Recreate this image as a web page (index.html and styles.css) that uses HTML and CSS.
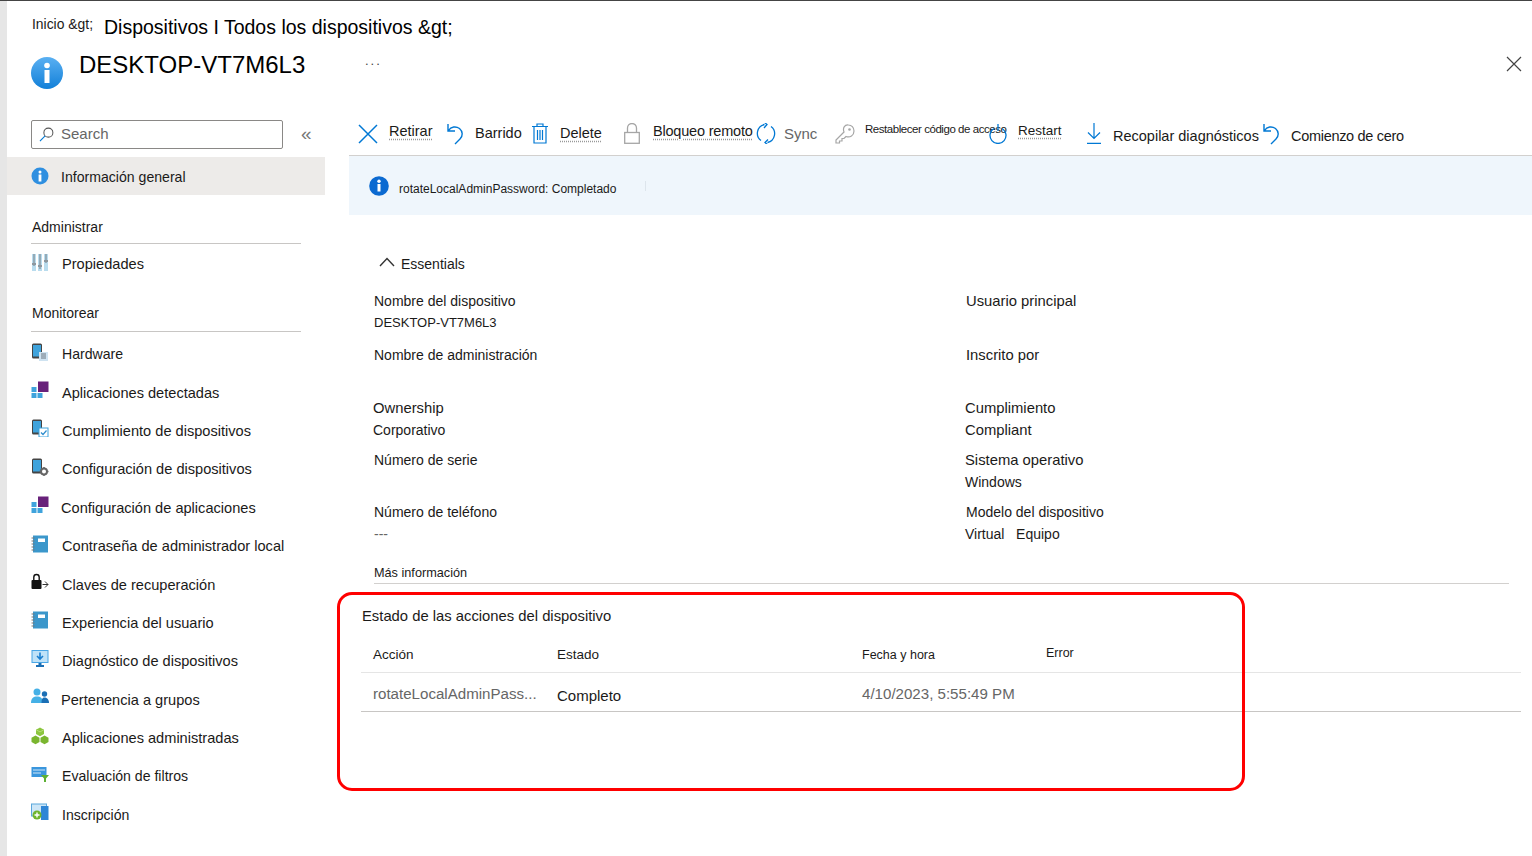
FILE: index.html
```html
<!DOCTYPE html>
<html lang="es">
<head>
<meta charset="UTF-8">
<title>DESKTOP-VT7M6L3</title>
<link rel="stylesheet" href="styles.css">
</head>
<body>
<div class="page">
  <div class="strip"></div>
  <div class="blade">
    <div class="blade-head">
      <div class="crumbs">
        <span class="crumb-home">Inicio &amp;gt;</span>
        <span class="crumb-path">Dispositivos I Todos los dispositivos &amp;gt;</span>
      </div>
      <div class="title-row">
        <svg class="title-icon" viewBox="0 0 32 32">
          <defs><linearGradient id="infoGrad" x1="0" y1="0" x2="0" y2="1"><stop offset="0" stop-color="#5ab0f2"/><stop offset="1" stop-color="#1280d8"/></linearGradient></defs>
          <circle cx="16" cy="16" r="16" fill="url(#infoGrad)"/>
          <rect x="13.5" y="13" width="5" height="13" fill="#fff"/>
          <circle cx="16" cy="8.5" r="2.8" fill="#fff"/>
        </svg>
        <h1 class="title">DESKTOP-VT7M6L3</h1>
        <span class="more">...</span>
        <svg class="close" viewBox="0 0 16 16"><path d="M1 1l14 14M15 1L1 15" stroke="#444" stroke-width="1.2" fill="none"/></svg>
      </div>
    </div>
    <div class="blade-body">
      <nav class="sidebar">
        <div class="search-row">
          <div class="search">
            <svg class="search-icon" viewBox="0 0 16 16"><circle cx="10" cy="6" r="4.8" fill="none" stroke="#555" stroke-width="1.1"/><path d="M6.5 9.5L1 15" stroke="#0078d4" stroke-width="1.2"/></svg>
            <span class="search-text">Search</span>
          </div>
          <span class="collapse">«</span>
        </div>
        <a class="nav-item active">
          <svg class="nav-icon" viewBox="0 0 18 18"><circle cx="9" cy="9" r="8.5" fill="#2f8fe0"/><rect x="7.6" y="7.5" width="2.8" height="7" fill="#fff"/><circle cx="9" cy="4.9" r="1.5" fill="#fff"/></svg>
          <span class="nav-text shift sm">Información general</span>
        </a>
        <div class="nav-group first">Administrar</div>
        <a class="nav-item">
          <svg class="nav-icon" viewBox="0 0 18 18"><path d="M1 1h4v17H1zM7 1h4v17H7zM13 1h4v17h-4z" fill="#b9dcee"/><path d="M3 1v12M9 1v15M15 1v9" stroke="#7f8a93" stroke-width="1.2"/><path d="M1 11h4M7 13h4M13 8h4" stroke="#8d979f" stroke-width="2"/></svg>
          <span class="nav-text">Propiedades</span>
        </a>
        <div class="nav-group second">Monitorear</div>
        <a class="nav-item tight">
          <svg class="nav-icon" viewBox="0 0 18 18"><rect x="1" y="0.5" width="10" height="15" rx="1.5" fill="#444"/><rect x="2" y="2" width="8" height="11.5" fill="#3fa3dc"/><rect x="8" y="9" width="9" height="9" fill="#cfe3f1"/><path d="M10 11h5M10 13h5M10 15h5" stroke="#6d7780"/></svg>
          <span class="nav-text sm">Hardware</span>
        </a>
        <a class="nav-item tight">
          <svg class="nav-icon" viewBox="0 0 18 18"><rect x="7" y="0.5" width="10.5" height="10.5" fill="#68217a"/><rect x="0.5" y="6" width="5" height="5" fill="#3fa3dc"/><rect x="0.5" y="12" width="5" height="5" fill="#3fa3dc"/><rect x="6.5" y="12" width="5" height="5" fill="#3fa3dc"/></svg>
          <span class="nav-text">Aplicaciones detectadas</span>
        </a>
        <a class="nav-item tight">
          <svg class="nav-icon" viewBox="0 0 18 18"><rect x="1" y="0.5" width="10" height="15" rx="1.5" fill="#444"/><rect x="2" y="2" width="8" height="11.5" fill="#3fa3dc"/><rect x="8" y="9" width="9" height="9" fill="#fff" stroke="#3fa3dc"/><path d="M10 13.5l2 2 3.5-4" stroke="#2d8ccc" fill="none" stroke-width="1.2"/></svg>
          <span class="nav-text">Cumplimiento de dispositivos</span>
        </a>
        <a class="nav-item tight">
          <svg class="nav-icon" viewBox="0 0 18 18"><rect x="1" y="0.5" width="10" height="15" rx="1.5" fill="#444"/><rect x="2" y="2" width="8" height="11.5" fill="#3fa3dc"/><circle cx="13" cy="13.5" r="3" fill="#fff" stroke="#666" stroke-width="2"/><path d="M13 9v1.5M13 16.5V18M8.5 13.5H10M16 13.5h1.5" stroke="#666" stroke-width="1.5"/></svg>
          <span class="nav-text">Configuración de dispositivos</span>
        </a>
        <a class="nav-item tight">
          <svg class="nav-icon" viewBox="0 0 18 18"><rect x="7" y="0.5" width="10.5" height="10.5" fill="#68217a"/><rect x="0.5" y="6" width="5" height="5" fill="#3fa3dc"/><rect x="0.5" y="12" width="5" height="5" fill="#3fa3dc"/><rect x="6.5" y="12" width="5" height="5" fill="#3fa3dc"/></svg>
          <span class="nav-text shift">Configuración de aplicaciones</span>
        </a>
        <a class="nav-item tight">
          <svg class="nav-icon" viewBox="0 0 18 18"><rect x="2" y="0.5" width="15" height="17" fill="#3b97cb"/><rect x="7" y="3.5" width="7" height="3.5" fill="#fff"/><path d="M0.5 3h3M0.5 6h3M0.5 9h3M0.5 12h3M0.5 15h3" stroke="#777"/></svg>
          <span class="nav-text">Contraseña de administrador local</span>
        </a>
        <a class="nav-item tight">
          <svg class="nav-icon" viewBox="0 0 18 18"><rect x="0.5" y="7" width="10" height="9" rx="1" fill="#111"/><path d="M2.8 7V4.2a2.7 2.7 0 0 1 5.4 0V7" fill="none" stroke="#111" stroke-width="1.4"/><path d="M11.5 11.5h5.5M14 8.500l3 3-3 3" fill="none" stroke="#333"/></svg>
          <span class="nav-text">Claves de recuperación</span>
        </a>
        <a class="nav-item tight">
          <svg class="nav-icon" viewBox="0 0 18 18"><rect x="2" y="0.5" width="15" height="17" fill="#3b97cb"/><rect x="7" y="3.5" width="7" height="3.5" fill="#fff"/><path d="M0.5 3h3M0.5 6h3M0.5 9h3M0.5 12h3M0.5 15h3" stroke="#777"/></svg>
          <span class="nav-text">Experiencia del usuario</span>
        </a>
        <a class="nav-item tight">
          <svg class="nav-icon" viewBox="0 0 18 18"><rect x="1" y="0.5" width="16" height="12" fill="#bfe2f8" stroke="#49a6e6"/><path d="M9 2.5v6M6 6l3 3 3-3" fill="none" stroke="#1b7fd0" stroke-width="1.6"/><path d="M7.5 13h3v2h2.5v2H5v-2h2.5z" fill="#1b6fb5"/></svg>
          <span class="nav-text">Diagnóstico de dispositivos</span>
        </a>
        <a class="nav-item tight">
          <svg class="nav-icon" viewBox="0 0 18 18"><circle cx="6" cy="4" r="3.5" fill="#45b0e6"/><path d="M0 15c0-5 2.500-6.500 6-6.500s6 1.500 6 6.500z" fill="#45b0e6"/><circle cx="13.5" cy="6" r="2.700" fill="#1b6fb5"/><path d="M10.500 15c0-4 1-5.500 3-5.500s4.500 1.500 4.500 5.500z" fill="#1b6fb5"/></svg>
          <span class="nav-text shift">Pertenencia a grupos</span>
        </a>
        <a class="nav-item tight">
          <svg class="nav-icon" viewBox="0 0 18 18"><path d="M9 0.500l4 2.200v4.300l-4 2.200-4-2.200V2.700z" fill="#8cc63f"/><path d="M5 2.700l4 2.200 4-2.200" fill="none" stroke="#b5dc77"/><path d="M4.500 8.500l4 2.200v4.300l-4 2.200-4-2.200v-4.300z" fill="#7ab52f"/><path d="M13.500 8.500l4 2.200v4.300l-4 2.200-4-2.200v-4.300z" fill="#7ab52f"/></svg>
          <span class="nav-text">Aplicaciones administradas</span>
        </a>
        <a class="nav-item tight">
          <svg class="nav-icon" viewBox="0 0 18 18"><rect x="0.500" y="2" width="15" height="10" fill="#3a96dd"/><path d="M2 5h12M2 8h8" stroke="#cfe6f7"/><path d="M10 10h8l-3 3.500V17h-2v-3.500z" fill="#5db034"/></svg>
          <span class="nav-text sm">Evaluación de filtros</span>
        </a>
        <a class="nav-item tight">
          <svg class="nav-icon" viewBox="0 0 18 18"><rect x="0.500" y="1" width="15" height="12" fill="#cde6f7" stroke="#5aa7dc"/><rect x="10" y="3" width="7.500" height="14" fill="#2f86d6"/><circle cx="6" cy="12" r="4.500" fill="#6fb52c"/><path d="M6 9.500v5M3.500 12h5" stroke="#fff" stroke-width="1.400"/></svg>
          <span class="nav-text sm">Inscripción</span>
        </a>
      </nav>
      <main class="main">
        <div class="toolbar">
          <div class="tool">
            <span class="tool-icon gap-31"><svg width="20" height="20" viewBox="0 0 20 20"><path d="M1 1l18 18M19 1L1 19" stroke="#0078d4" stroke-width="1.500" fill="none"/></svg></span>
            <span class="tool-text ghost lift-6">Retirar</span>
          </div>
          <div class="tool">
            <span class="tool-icon gap-28"><svg width="17" height="22" viewBox="0 0 17 22"><path d="M1 1v7h7M1.500 7.500C4 3.500 9 3 12.500 5.500c3.500 3 3.500 7.500.5 10.500l-5 5" stroke="#0078d4" stroke-width="1.400" fill="none"/></svg></span>
            <span class="tool-text lift-2">Barrido</span>
          </div>
          <div class="tool">
            <span class="tool-icon gap-28"><svg width="16" height="21" viewBox="0 0 16 21"><path d="M0 3.500h16M5 3.500V1h6v2.500M2 3.500v16.500h12V3.500M5.500 7v10M8 7v10M10.500 7v10" stroke="#0078d4" stroke-width="1.200" fill="none"/></svg></span>
            <span class="tool-text ghost lift-2">Delete</span>
          </div>
          <div class="tool">
            <span class="tool-icon gap-29"><svg width="16" height="21" viewBox="0 0 16 21"><path d="M3.500 9.500V5a4.500 4.500 0 0 1 9 0v4.500" stroke="#a6a6a6" stroke-width="1.300" fill="none"/><rect x="0.700" y="9.500" width="14.600" height="10.800" fill="none" stroke="#a6a6a6" stroke-width="1.300"/></svg></span>
            <span class="tool-text ghost narrow lift-6">Bloqueo remoto</span>
          </div>
          <div class="tool">
            <span class="tool-icon gap-28"><svg width="20" height="21" viewBox="0 0 20 21"><path d="M8.500 1.500A9 9 0 0 0 5 17.500M11.500 19.500A9 9 0 0 0 15 3.500" stroke="#0078d4" stroke-width="1.300" fill="none"/><path d="M8 -1l3 2.500L8 5M12 22l-3-2.500 3-3" stroke="#0078d4" stroke-width="1.300" fill="none"/></svg></span>
            <span class="tool-text muted">Sync</span>
          </div>
          <div class="tool">
            <span class="tool-icon gap-30"><svg width="20" height="20" viewBox="0 0 20 20"><path d="M9 8L1 16v3h3.500v-2H7v-2.500h2l2-2c4 1.500 8-1 8-5.500 0-3.500-2.500-6-5.500-6C9.500.500 7.500 4 9 8z" stroke="#a6a6a6" stroke-width="1.200" fill="none"/><circle cx="14.500" cy="5.500" r="1.300" fill="#a6a6a6"/></svg></span>
            <span class="tool-text small lift-10">Restablecer código de acceso</span>
          </div>
          <div class="tool">
            <span class="tool-icon gap-29"><svg width="18" height="20" viewBox="0 0 18 20"><path d="M5 4.500a8 8 0 1 0 8 0" stroke="#0078d4" stroke-width="1.300" fill="none"/><path d="M9 0v7" stroke="#0078d4" stroke-width="1.300"/></svg></span>
            <span class="tool-text ghost restart lift-6">Restart</span>
          </div>
          <div class="tool">
            <span class="tool-icon gap-26"><svg width="14" height="21" viewBox="0 0 14 21"><path d="M7 0v15M1 9.500L7 15.500l6-6M0 20.300h14" stroke="#0078d4" stroke-width="1.200" fill="none"/></svg></span>
            <span class="tool-text drop-4">Recopilar diagnósticos</span>
          </div>
          <div class="tool">
            <span class="tool-icon gap-28"><svg width="17" height="22" viewBox="0 0 17 22"><path d="M1 1v7h7M1.500 7.500C4 3.500 9 3 12.500 5.500c3.500 3 3.500 7.500.5 10.500l-5 5" stroke="#0078d4" stroke-width="1.400" fill="none"/></svg></span>
            <span class="tool-text narrow-more drop-4">Comienzo de cero</span>
          </div>
        </div>
        <div class="banner">
          <svg class="banner-icon" viewBox="0 0 20 20"><circle cx="10" cy="10" r="9.800" fill="#0b6ad1"/><rect x="8.500" y="8" width="3" height="7.500" fill="#fff"/><circle cx="10" cy="5.300" r="1.700" fill="#fff"/></svg>
          <span class="banner-text">rotateLocalAdminPassword: Completado</span>
          <span class="banner-rule"></span>
        </div>
        <div class="essentials">
          <div class="essentials-head">
            <svg width="16" height="10" viewBox="0 0 16 10"><path d="M1 9l7-7.500L15 9" stroke="#333" stroke-width="1.400" fill="none"/></svg>
            <span>Essentials</span>
          </div>
          <div class="fields">
            <div class="field"><div>Nombre del dispositivo</div><div class="value-sm">DESKTOP-VT7M6L3</div></div>
            <div class="field lg"><div>Usuario principal</div></div>
            <div class="field"><div>Nombre de administración</div></div>
            <div class="field lg"><div>Inscrito por</div></div>
            <div class="field nudge"><div class="lg">Ownership</div><div>Corporativo</div></div>
            <div class="field nudge lg"><div>Cumplimiento</div><div>Compliant</div></div>
            <div class="field"><div>Número de serie</div></div>
            <div class="field nudge"><div class="lg">Sistema operativo</div><div>Windows</div></div>
            <div class="field"><div>Número de teléfono</div><div class="dashes">---</div></div>
            <div class="field"><div>Modelo del dispositivo</div><div class="nudge">Virtual &nbsp; Equipo</div></div>
          </div>
          <div class="more-info">Más información</div>
        </div>
        <section class="actions">
          <div class="actions-title">Estado de las acciones del dispositivo</div>
          <div class="actions-row actions-headers">
            <span>Acción</span>
            <span>Estado</span>
            <span class="condensed">Fecha y hora</span>
            <span class="condensed error-head">Error</span>
          </div>
          <div class="actions-row actions-data">
            <span class="cell-muted">rotateLocalAdminPass...</span>
            <span class="cell-status">Completo</span>
            <span class="cell-muted">4/10/2023, 5:55:49 PM</span>
            <span></span>
          </div>
          <div class="highlight"></div>
        </section>
      </main>
    </div>
  </div>
</div>
</body>
</html>
```

FILE: styles.css
```css
* {
  box-sizing: border-box;
}
html, body {
  margin: 0;
  height: 100%;
  overflow: hidden;
}
body {
  font-family: "Liberation Sans", Arial, sans-serif;
  font-size: 14.5px;
  color: #1b1a19;
  background: #fff;
}
.page {
  display: flex;
  height: 856px;
  border-top: 1px solid #444;
}
.strip {
  width: 7px;
  background: #e6e6e6;
  flex: none;
}
.blade {
  flex: 1;
  min-width: 0;
}

/* header */
.blade-head {
  height: 119px;
  padding: 14px 10px 0 24px;
}
.crumbs {
  display: flex;
  align-items: flex-start;
  height: 26px;
  margin-left: 1px;
}
.crumb-home {
  font-size: 13.9px;
  width: 72px;
  line-height: 18px;
}
.crumb-path {
  font-size: 19.5px;
  line-height: 25px;
  color: #000;
}
.title-row {
  display: flex;
  align-items: flex-start;
  padding-top: 16px;
}
.title-icon {
  width: 32px;
  height: 32px;
  flex: none;
}
.title {
  margin: -8px 0 0 16px;
  width: 286px;
  font-size: 24px;
  font-weight: 400;
  line-height: 32px;
  color: #000;
}
.more {
  font-size: 13px;
  letter-spacing: 2px;
  line-height: 10px;
  margin-top: -1px;
  color: #444;
}
.close {
  width: 16px;
  height: 16px;
  margin-left: auto;
  margin-top: -1px;
}

/* sidebar */
.blade-body {
  display: flex;
}
.sidebar {
  width: 318px;
  flex: none;
}
.search-row {
  display: flex;
  align-items: center;
  height: 37px;
  padding: 0 0 8px 24px;
}
.search {
  display: flex;
  align-items: center;
  gap: 7px;
  width: 252px;
  height: 29px;
  padding-left: 7px;
  border: 1px solid #8a8886;
  border-radius: 2px;
  color: #666;
  font-size: 15px;
}
.search-icon {
  width: 15px;
  height: 15px;
}
.search-text {
  margin-top: -2px;
}
.collapse {
  margin: -2px 0 0 18px;
  font-size: 19px;
  color: #777;
  line-height: 20px;
}
.nav-item {
  display: flex;
  align-items: center;
  height: 38px;
  padding-left: 24px;
}
.nav-item.tight {
  height: 38.4px;
}
.nav-item.active {
  background: #edebe9;
}
.nav-icon {
  width: 18px;
  height: 18px;
  flex: none;
  margin-top: -5px;
}
.active .nav-icon {
  margin-top: 0;
}
.nav-text {
  margin-left: 13px;
  font-size: 14.6px;
}
.nav-text.shift {
  margin-left: 12px;
}
.nav-text.sm {
  font-size: 14.1px;
}
.active .nav-text {
  margin-top: 2px;
}
.nav-group {
  margin-left: 24px;
  width: 270px;
  border-bottom: 1px solid #c8c6c4;
  line-height: 18px;
  font-size: 14px;
}
.nav-group.first {
  padding: 23px 0 7px 1px;
  margin-bottom: 1px;
}
.nav-group.second {
  padding: 21px 0 9px 1px;
  margin-bottom: 3px;
}

/* command bar */
.main {
  flex: 1;
  min-width: 0;
  margin-left: 24px;
  position: relative;
}
.toolbar {
  display: grid;
  grid-template-columns: 89px 85px 92px 132px 79px 154px 98px 176px 141px;
  align-items: center;
  height: 36px;
  padding-left: 9px;
  border-bottom: 1px solid #d2d0ce;
  padding-bottom: 8px;
}
.tool {
  display: flex;
  align-items: center;
  white-space: nowrap;
  min-width: 0;
}
.tool-icon {
  display: flex;
  flex: none;
}
.gap-26 { width: 26px; }
.gap-28 { width: 28px; }
.gap-29 { width: 29px; }
.gap-30 { width: 30px; }
.gap-31 { width: 31px; }
.tool-text {
  font-size: 14.5px;
}
.tool-text.ghost {
  text-decoration: underline dotted #999;
  text-underline-offset: 3px;
}
.tool-text.narrow {
  letter-spacing: -0.2px;
}
.tool-text.narrow-more {
  letter-spacing: -0.3px;
}
.tool-text.muted {
  color: #666;
  font-size: 15px;
}
.tool-text.small {
  font-size: 11.5px;
  letter-spacing: -0.45px;
}
.tool-text.restart {
  font-size: 13.5px;
}
.lift-2 { margin-top: -2px; }
.lift-6 { margin-top: -6px; }
.lift-10 { margin-top: -10px; }
.drop-4 { margin-top: 4px; }

/* banner */
.banner {
  display: flex;
  align-items: center;
  height: 59px;
  padding: 0 0 0 20px;
  background: #eff6fc;
}
.banner-icon {
  width: 20px;
  height: 20px;
  flex: none;
}
.banner-text {
  margin: 6px 0 0 10px;
  font-size: 12px;
  color: #1b1a19;
}
.banner-rule {
  width: 1px;
  height: 10px;
  margin-left: 29px;
  background: #dde5ec;
}

/* essentials */
.essentials {
  padding: 40px 23px 0 25px;
}
.essentials-head {
  display: flex;
  align-items: center;
  gap: 6px;
  margin-left: 5px;
  height: 18px;
  font-size: 14px;
}
.essentials-head svg {
  margin-top: -4px;
}
.fields {
  display: grid;
  grid-template-columns: 592px 1fr;
  grid-template-rows: 54px 53px 52px 52px 62px;
  margin-top: 17px;
  font-size: 14px;
  line-height: 22px;
}
.lg {
  font-size: 14.8px;
}
.value-sm {
  font-size: 13px;
}
.nudge {
  margin-left: -1px;
}
.dashes {
  color: #666;
}
.more-info {
  font-size: 12.7px;
  line-height: 20px;
  border-bottom: 1px solid #d2d0ce;
}

/* device action status */
.actions {
  position: relative;
  margin-top: 22px;
  padding-left: 12px;
  margin-right: 11px;
}
.actions-title {
  font-size: 14.8px;
  line-height: 20px;
  margin: 0 0 7px 1px;
}
.actions-row {
  display: grid;
  grid-template-columns: 184px 305px 184px 1fr;
  padding-left: 12px;
  align-items: center;
}
.actions-headers {
  height: 40px;
  padding-top: 4px;
  font-size: 13.5px;
  border-bottom: 1px solid #e5e5e5;
}
.actions-data {
  height: 39px;
  border-bottom: 1px solid #c8c6c4;
}
.condensed {
  font-size: 12.5px;
}
.error-head {
  margin-top: -4px;
}
.cell-muted {
  color: #666;
  font-size: 15.1px;
  margin-top: 2px;
}
.cell-status {
  font-size: 15px;
  margin-top: 7px;
}

/* red annotation over the table */
.highlight {
  position: absolute;
  left: -12px;
  top: -14px;
  width: 908px;
  height: 199px;
  border: 3px solid #f00;
  border-radius: 15px;
  pointer-events: none;
}
```
